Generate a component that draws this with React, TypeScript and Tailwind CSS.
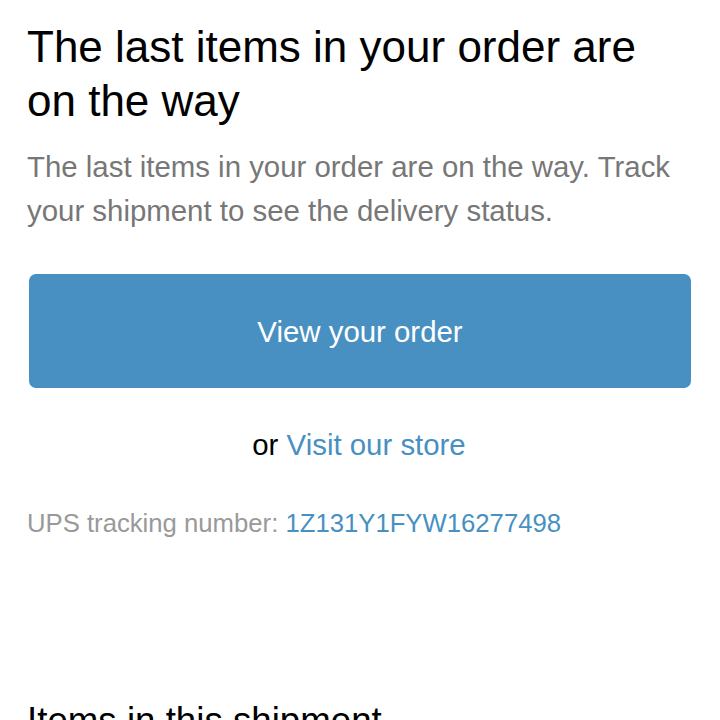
export default function App() {
  return (
    <div className="min-h-screen bg-white pl-[27px] pr-[29px] pt-[20px] font-['Liberation_Sans',Arial,sans-serif]">
      <h2 className="text-[44px] leading-[54px] text-black">The last items in your order are on the way</h2>
      <p className="mt-[17px] text-[29.4px] leading-[44px] text-[#777777]">
        The last items in your order are on the way. Track your shipment to see the delivery status.
      </p>
      <a
        href="#"
        className="ml-[2px] mt-[41px] flex h-[114px] items-center justify-center rounded-[7px] bg-[#4890c2] pt-[3px] text-[29.4px] text-white"
      >
        View your order
      </a>
      <p className="mt-[35px] text-center text-[29.4px] leading-[44px] text-black">
        or{' '}
        <a href="#" className="text-[#4890c2]">
          Visit our store
        </a>
      </p>
      <p className="mt-[37px] text-[25.7px] leading-[38.6px] text-[#999999]">
        UPS tracking number:{' '}
        <a href="#" className="text-[#4890c2]">
          1Z131Y1FYW16277498
        </a>
      </p>
      <h3 className="mt-[156px] text-[36.7px] leading-[44px] text-black">Items in this shipment</h3>
    </div>
  );
}
